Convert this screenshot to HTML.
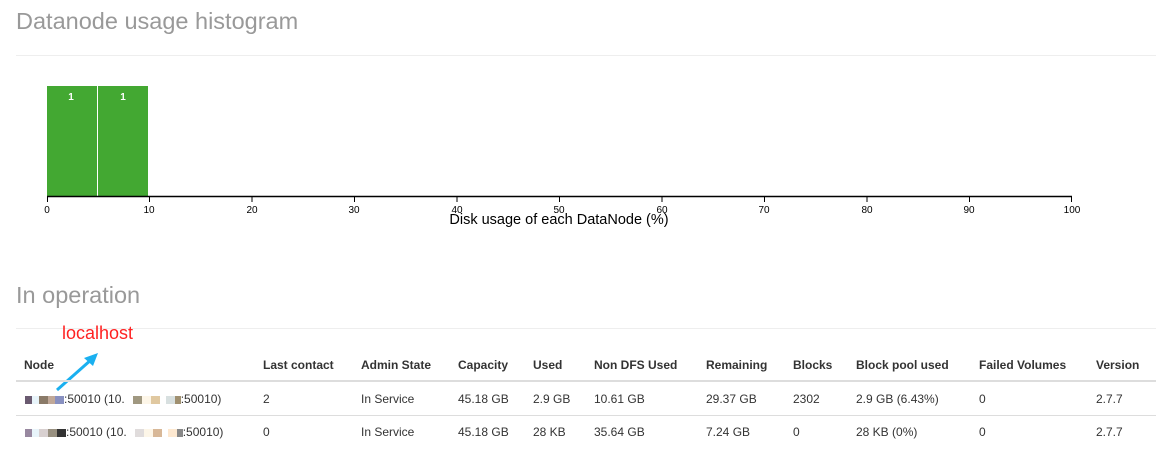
<!DOCTYPE html>
<html><head><meta charset="utf-8"><style>
body{margin:0;width:1170px;height:459px;background:#fff;font-family:"Liberation Sans",Arial,sans-serif;position:relative;overflow:hidden;color:#333}
.h{position:absolute;left:16px;font-size:23.5px;color:#999;margin:0;font-weight:normal;line-height:1}
.hr{position:absolute;left:16px;width:1140px;height:1px;background:#eee}
.t{position:absolute;font-size:12px;white-space:nowrap}
.b{font-weight:bold}
.line{position:absolute;left:16px;width:1140px;background:#ddd}
.px{display:inline-block;width:9px;height:8px;vertical-align:middle}
</style></head><body>
<div class="h" style="top:10px">Datanode usage histogram</div>
<div class="hr" style="top:55px"></div>
<svg style="position:absolute;left:0;top:0" width="1170" height="240">
<rect x="47" y="86" width="50" height="110" fill="#43a832"/>
<rect x="98" y="86" width="50" height="110" fill="#43a832"/>
<text x="71" y="100" fill="#fff" font-size="10" font-weight="bold" text-anchor="middle" font-family="Liberation Sans">1</text>
<text x="123" y="100" fill="#fff" font-size="10" font-weight="bold" text-anchor="middle" font-family="Liberation Sans">1</text>
<line x1="47" y1="196.5" x2="1072" y2="196.5" stroke="#000" stroke-width="1.5"/>
<g stroke="#000" stroke-width="1">
<line x1="47.5" y1="196" x2="47.5" y2="202"/><line x1="149.5" y1="196" x2="149.5" y2="202"/><line x1="252" y1="196" x2="252" y2="202"/><line x1="354.5" y1="196" x2="354.5" y2="202"/><line x1="457" y1="196" x2="457" y2="202"/><line x1="559.5" y1="196" x2="559.5" y2="202"/><line x1="662" y1="196" x2="662" y2="202"/><line x1="764.5" y1="196" x2="764.5" y2="202"/><line x1="867" y1="196" x2="867" y2="202"/><line x1="969.5" y1="196" x2="969.5" y2="202"/><line x1="1071.5" y1="196" x2="1071.5" y2="202"/>
</g>
<g font-size="10" font-family="Liberation Sans" text-anchor="middle" fill="#000">
<text x="47" y="213">0</text><text x="149" y="213">10</text><text x="252" y="213">20</text><text x="354" y="213">30</text><text x="457" y="213">40</text><text x="559" y="213">50</text><text x="662" y="213">60</text><text x="764" y="213">70</text><text x="867" y="213">80</text><text x="969" y="213">90</text><text x="1072" y="213">100</text>
</g>
<text x="559" y="224" font-size="14.5" font-family="Liberation Sans" text-anchor="middle" fill="#000">Disk usage of each DataNode (%)</text>
</svg>
<div class="h" style="top:284px">In operation</div>
<div class="hr" style="top:328px"></div>
<div class="t" style="left:62px;top:323px;font-size:18px;color:#f22">localhost</div>
<svg style="position:absolute;left:50px;top:350px" width="60" height="45"><line x1="7" y1="40" x2="42" y2="9" stroke="#1ab0f0" stroke-width="3"/><polygon points="48,3 34,8 43,16" fill="#1ab0f0"/></svg>
<div class="line" style="top:380px;height:2px"></div>
<div class="line" style="top:415px;height:1px"></div>
<div class="t b" style="left:24px;top:358px">Node</div>
<div class="t b" style="left:263px;top:358px">Last contact</div>
<div class="t b" style="left:361px;top:358px">Admin State</div>
<div class="t b" style="left:458px;top:358px">Capacity</div>
<div class="t b" style="left:533px;top:358px">Used</div>
<div class="t b" style="left:594px;top:358px">Non DFS Used</div>
<div class="t b" style="left:706px;top:358px">Remaining</div>
<div class="t b" style="left:793px;top:358px">Blocks</div>
<div class="t b" style="left:856px;top:358px">Block pool used</div>
<div class="t b" style="left:979px;top:358px">Failed Volumes</div>
<div class="t b" style="left:1096px;top:358px">Version</div>

<div class="t" style="left:25px;top:392px"><span class="px" style="background:#6a5a70;width:7px"></span><span class="px" style="background:#e8f4fa;width:7px"></span><span class="px" style="background:#8a7a68"></span><span class="px" style="background:#c0a898;width:7px"></span><span class="px" style="background:#8890c0"></span>:50010 (10.<span class="px" style="background:#fff;width:8px"></span><span class="px" style="background:#a09880"></span><span class="px" style="background:#fdf6e8"></span><span class="px" style="background:#e0c8a0"></span><span class="px" style="background:#fff;width:6px"></span><span class="px" style="background:#d8e0e0"></span><span class="px" style="background:#a09070;width:6px"></span>:50010)</div>
<div class="t" style="left:263px;top:392px">2</div>
<div class="t" style="left:361px;top:392px">In Service</div>
<div class="t" style="left:458px;top:392px">45.18 GB</div>
<div class="t" style="left:533px;top:392px">2.9 GB</div>
<div class="t" style="left:594px;top:392px">10.61 GB</div>
<div class="t" style="left:706px;top:392px">29.37 GB</div>
<div class="t" style="left:793px;top:392px">2302</div>
<div class="t" style="left:856px;top:392px">2.9 GB (6.43%)</div>
<div class="t" style="left:979px;top:392px">0</div>
<div class="t" style="left:1096px;top:392px">2.7.7</div>

<div class="t" style="left:25px;top:425px"><span class="px" style="background:#9888a0;width:7px"></span><span class="px" style="background:#e8f4fa;width:7px"></span><span class="px" style="background:#d8d0d0"></span><span class="px" style="background:#989080"></span><span class="px" style="background:#333"></span>:50010 (10.<span class="px" style="background:#fff;width:8px"></span><span class="px" style="background:#e0dcdc"></span><span class="px" style="background:#fdf6e8"></span><span class="px" style="background:#d8b898"></span><span class="px" style="background:#fff;width:6px"></span><span class="px" style="background:#fde8d0"></span><span class="px" style="background:#888;width:6px"></span>:50010)</div>
<div class="t" style="left:263px;top:425px">0</div>
<div class="t" style="left:361px;top:425px">In Service</div>
<div class="t" style="left:458px;top:425px">45.18 GB</div>
<div class="t" style="left:533px;top:425px">28 KB</div>
<div class="t" style="left:594px;top:425px">35.64 GB</div>
<div class="t" style="left:706px;top:425px">7.24 GB</div>
<div class="t" style="left:793px;top:425px">0</div>
<div class="t" style="left:856px;top:425px">28 KB (0%)</div>
<div class="t" style="left:979px;top:425px">0</div>
<div class="t" style="left:1096px;top:425px">2.7.7</div>
</body></html>
